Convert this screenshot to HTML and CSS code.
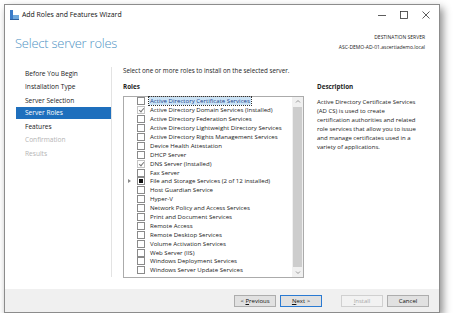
FILE: index.html
```html
<!DOCTYPE html>
<html lang="en">
<head>
  <meta charset="UTF-8">
  <title>Add Roles and Features Wizard</title>
  <link rel="stylesheet" href="styles.css">
</head>
<body>
  <div class="window">
    <div class="titlebar">
      <svg class="app-icon" width="9" height="10" viewBox="0 0 9 10">
        <rect x="0" y="0" width="3" height="9" fill="#3a7bc8"/>
        <rect x="3" y="5" width="6" height="4" fill="#6fa8dc"/>
        <rect x="0" y="9" width="9" height="1" fill="#2c5f9e"/>
      </svg>
      <span class="title">Add Roles and Features Wizard</span>
      <div class="controls">
        <svg width="10" height="10" viewBox="0 0 10 10"><line x1="1" y1="5.5" x2="9" y2="5.5" stroke="#333" stroke-width="0.8"/></svg>
        <svg width="10" height="10" viewBox="0 0 10 10"><rect x="1.5" y="1.5" width="7" height="7" fill="none" stroke="#333" stroke-width="0.8"/></svg>
        <svg width="10" height="10" viewBox="0 0 10 10"><path d="M1.5 1.5 L8.5 8.5 M8.5 1.5 L1.5 8.5" stroke="#333" stroke-width="0.8"/></svg>
      </div>
    </div>

    <div class="header">
      <h1>Select server roles</h1>
      <div class="dest">
        <div>DESTINATION SERVER</div>
        <div>ASC-DEMO-AD-01.ascertiademo.local</div>
      </div>
    </div>

    <div class="content">
      <ul class="nav">
        <li>Before You Begin</li>
        <li>Installation Type</li>
        <li>Server Selection</li>
        <li class="active">Server Roles</li>
        <li>Features</li>
        <li class="disabled">Confirmation</li>
        <li class="disabled">Results</li>
      </ul>

      <div class="main">
        <p class="intro">Select one or more roles to install on the selected server.</p>
        <div class="columns">
          <div class="roles">
            <div class="label">Roles</div>
            <div class="listbox">
              <ul class="items">
                <li><span class="exp"></span><span class="cb"></span><span class="name selected">Active Directory Certificate Services</span></li>
                <li><span class="exp"></span><span class="cb checked"></span><span class="name">Active Directory Domain Services (Installed)</span></li>
                <li><span class="exp"></span><span class="cb"></span><span class="name">Active Directory Federation Services</span></li>
                <li><span class="exp"></span><span class="cb"></span><span class="name">Active Directory Lightweight Directory Services</span></li>
                <li><span class="exp"></span><span class="cb"></span><span class="name">Active Directory Rights Management Services</span></li>
                <li><span class="exp"></span><span class="cb"></span><span class="name">Device Health Attestation</span></li>
                <li><span class="exp"></span><span class="cb"></span><span class="name">DHCP Server</span></li>
                <li><span class="exp"></span><span class="cb checked"></span><span class="name">DNS Server (Installed)</span></li>
                <li><span class="exp"></span><span class="cb"></span><span class="name">Fax Server</span></li>
                <li><span class="exp arrow"></span><span class="cb partial"></span><span class="name">File and Storage Services (2 of 12 installed)</span></li>
                <li><span class="exp"></span><span class="cb"></span><span class="name">Host Guardian Service</span></li>
                <li><span class="exp"></span><span class="cb"></span><span class="name">Hyper-V</span></li>
                <li><span class="exp"></span><span class="cb"></span><span class="name">Network Policy and Access Services</span></li>
                <li><span class="exp"></span><span class="cb"></span><span class="name">Print and Document Services</span></li>
                <li><span class="exp"></span><span class="cb"></span><span class="name">Remote Access</span></li>
                <li><span class="exp"></span><span class="cb"></span><span class="name">Remote Desktop Services</span></li>
                <li><span class="exp"></span><span class="cb"></span><span class="name">Volume Activation Services</span></li>
                <li><span class="exp"></span><span class="cb"></span><span class="name">Web Server (IIS)</span></li>
                <li><span class="exp"></span><span class="cb"></span><span class="name">Windows Deployment Services</span></li>
                <li><span class="exp"></span><span class="cb"></span><span class="name">Windows Server Update Services</span></li>
              </ul>
              <div class="scrollbar">
                <svg class="arrow-btn" width="10" height="9" viewBox="0 0 10 9"><path d="M3 5.5 L5 3.5 L7 5.5" fill="none" stroke="#999" stroke-width="1"/></svg>
                <div class="thumb"></div>
                <svg class="arrow-btn" width="10" height="9" viewBox="0 0 10 9"><path d="M3 3.5 L5 5.5 L7 3.5" fill="none" stroke="#999" stroke-width="1"/></svg>
              </div>
            </div>
          </div>
          <div class="desc">
            <div class="label">Description</div>
            <p>Active Directory Certificate Services<br>(AD CS) is used to create<br>certification authorities and related<br>role services that allow you to issue<br>and manage certificates used in a<br>variety of applications.</p>
          </div>
        </div>
      </div>
    </div>

    <div class="footer">
      <button><span>&lt; <u>P</u>revious</span></button>
      <button class="default"><span><u>N</u>ext &gt;</span></button>
      <button class="gap" disabled><span><u>I</u>nstall</span></button>
      <button><span>Cancel</span></button>
    </div>
  </div>
</body>
</html>
```

FILE: styles.css
```css
body { margin: 0; background: #fff; font-family: "Open Sans", "Noto Sans", sans-serif; color: #1e1e1e; }

.window { margin: 4px 0 0 4px; width: 434px; height: 307px; border: 1px solid #8c8c8c; background: #fff; box-shadow: 3px 4px 8px rgba(0,0,0,0.45); display: flex; flex-direction: column; }

.titlebar { height: 19px; display: flex; align-items: center; padding-left: 5px; }
.app-icon { margin-right: 3px; }
.title { font-size: 6.9px; color: #111; }
.controls { margin-left: auto; display: flex; gap: 12px; padding-right: 8px; }

.header { height: 37px; display: flex; justify-content: space-between; align-items: flex-start; padding: 0 14px 0 10px; }
h1 { margin: 10px 0 0; font-size: 12.9px; font-weight: 300; color: #4f93c4; letter-spacing: -0.2px; }
.dest { margin-top: 8px; text-align: right; font-size: 5px; line-height: 10px; color: #222; }

.content { flex: 1; display: flex; min-height: 0; }
.nav { list-style: none; margin: 6px 0 12px; padding: 0 0 0 11px; width: 95px; border-right: 1px solid #e3e3e3; }
.nav li { height: 13.3px; line-height: 13.3px; padding-left: 9px; font-size: 6.6px; color: #222; }
.nav li.active { background: #1e6fbd; color: #fff; height: 12px; line-height: 12px; margin: 0.6px 0 0.7px; }
.nav li.disabled { color: #b4b4b4; }

.main { flex: 1; padding: 5px 0 0 11px; }
.intro { margin: 0; font-size: 6.3px; line-height: 10px; }
.columns { display: flex; gap: 13px; margin-top: 6px; }
.label { font-size: 6.3px; font-weight: bold; height: 10px; line-height: 10px; }

.roles { width: 181px; }
.listbox { margin-top: 4px; height: 180px; border: 1px solid #ababab; display: flex; }
.items { list-style: none; margin: 0; padding: 0; flex: 1; }
.items li { height: 8.9px; display: flex; align-items: center; font-size: 6.1px; color: #222; white-space: nowrap; }
.exp { width: 13px; height: 8px; position: relative; }
.exp.arrow::after { content: ""; position: absolute; left: 4px; top: 2px; border-left: 3px solid #8a8a8a; border-top: 2.5px solid transparent; border-bottom: 2.5px solid transparent; }
.cb { width: 6px; height: 6px; border: 1px solid #8a8a8a; background: #fff; margin-right: 4px; position: relative; box-sizing: content-box; }
.cb.checked { border-color: #c4c4c4; }
.cb.checked::after { content: ""; position: absolute; left: 1.5px; top: 0; width: 2px; height: 4px; border-right: 1px solid #777; border-bottom: 1px solid #777; transform: rotate(40deg); }
.cb.partial::after { content: ""; position: absolute; left: 1px; top: 1px; width: 4px; height: 4px; background: #111; }
.name { padding: 0 1px; line-height: 8px; }
.name.selected { background: #cce4f7; outline: 1px dotted #333; color: #1a3f8a; }

.scrollbar { width: 11px; background: #f0f0f0; display: flex; flex-direction: column; align-items: center; }
.arrow-btn { flex: none; }
.thumb { flex: 1; width: 9px; background: #cdcdcd; margin: 1px 0; }

.desc { flex: 1; padding-top: 0; }
.desc p { margin: 6px 0 0; font-size: 6px; line-height: 8.9px; color: #222; }

.footer { height: 23px; background: #f0f0f0; display: flex; justify-content: flex-end; align-items: center; gap: 4px; padding-right: 10px; }
button { width: 42px; height: 12px; padding: 0; border: 1px solid #adadad; background: #e1e1e1; font-family: inherit; font-size: 6px; color: #111; display: flex; align-items: center; justify-content: center; }
button.default { border-color: #2a7ad2; }
button.gap { margin-left: 15px; }
button:disabled { background: #f2f2f2; border-color: #d0d0d0; color: #a8a8a8; }
```
